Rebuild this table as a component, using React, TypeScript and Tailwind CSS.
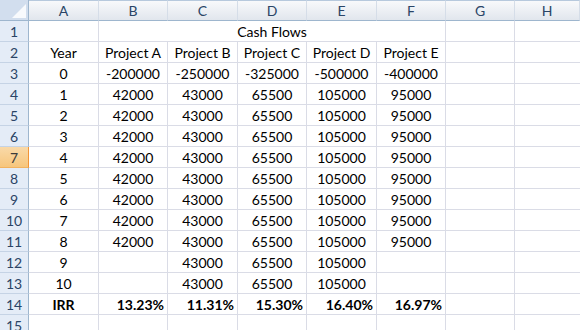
const cols = ['A', 'B', 'C', 'D', 'E', 'F', 'G', 'H'];

type Cell = { v: string; align?: 'c' | 'r'; bold?: boolean };

const body: Cell[][] = [
  [],
  [{ v: 'Year' }, { v: 'Project A' }, { v: 'Project B' }, { v: 'Project C' }, { v: 'Project D' }, { v: 'Project E' }],
  [{ v: '0' }, { v: '-200000' }, { v: '-250000' }, { v: '-325000' }, { v: '-500000' }, { v: '-400000' }],
  [{ v: '1' }, { v: '42000' }, { v: '43000' }, { v: '65500' }, { v: '105000' }, { v: '95000' }],
  [{ v: '2' }, { v: '42000' }, { v: '43000' }, { v: '65500' }, { v: '105000' }, { v: '95000' }],
  [{ v: '3' }, { v: '42000' }, { v: '43000' }, { v: '65500' }, { v: '105000' }, { v: '95000' }],
  [{ v: '4' }, { v: '42000' }, { v: '43000' }, { v: '65500' }, { v: '105000' }, { v: '95000' }],
  [{ v: '5' }, { v: '42000' }, { v: '43000' }, { v: '65500' }, { v: '105000' }, { v: '95000' }],
  [{ v: '6' }, { v: '42000' }, { v: '43000' }, { v: '65500' }, { v: '105000' }, { v: '95000' }],
  [{ v: '7' }, { v: '42000' }, { v: '43000' }, { v: '65500' }, { v: '105000' }, { v: '95000' }],
  [{ v: '8' }, { v: '42000' }, { v: '43000' }, { v: '65500' }, { v: '105000' }, { v: '95000' }],
  [{ v: '9' }, { v: '' }, { v: '43000' }, { v: '65500' }, { v: '105000' }, { v: '' }],
  [{ v: '10' }, { v: '' }, { v: '43000' }, { v: '65500' }, { v: '105000' }, { v: '' }],
  [
    { v: 'IRR', bold: true },
    { v: '13.23%', align: 'r', bold: true },
    { v: '11.31%', align: 'r', bold: true },
    { v: '15.30%', align: 'r', bold: true },
    { v: '16.40%', align: 'r', bold: true },
    { v: '16.97%', align: 'r', bold: true },
  ],
  [],
];

function RowHead({ n }: { n: number }) {
  const active = n === 7;
  return (
    <div
      className={
        active
          ? 'flex items-center justify-center border-r border-b border-r-[#f29436] border-b-[#f2b25f] bg-gradient-to-b from-[#f9d9a8] to-[#f7c67c] text-[#3b3b3b]'
          : 'flex items-center justify-center border-r border-b border-r-[#9eb6ce] border-b-[#c5d3e5] bg-[#e4ecf7] text-[#2a4466]'
      }
    >
      {n}
    </div>
  );
}

export default function App() {
  return (
    <div
      className="w-[580px] h-[330px] overflow-hidden bg-white text-[14px] text-black"
      style={{ fontFamily: 'Lato, "Open Sans", sans-serif' }}
    >
      <div className="grid grid-cols-[29px_70px_69px_70px_69px_70px_69px_69px_1fr] grid-rows-[21px] auto-rows-[21px]">
        {/* corner */}
        <div className="relative border-r border-b border-[#9eb6ce] bg-[#d2deee]">
          <svg className="absolute right-[2px] bottom-[2px]" width="14" height="14" viewBox="0 0 14 14">
            <polygon points="14,0 14,14 0,14" fill="#ffffff" opacity="0.85" />
          </svg>
        </div>
        {cols.map((c) => (
          <div
            key={c}
            className="flex items-center justify-center border-t border-t-[#b7c9dd] border-r border-r-[#d5dde8] border-b border-b-[#9eb6ce] bg-gradient-to-b from-[#f8f9fb] to-[#e1e6ed] text-[#2a4466]"
          >
            {c}
          </div>
        ))}

        {body.map((row, ri) => {
          const n = ri + 1;
          return [
            <RowHead key={`h${n}`} n={n} />,
            n === 1 ? (
              <>
                <div key="a1" className="border-r border-b border-[#dadce6]" />
                <div
                  key="m1"
                  className="col-span-5 flex items-center justify-center border-r border-b border-[#dadce6]"
                >
                  Cash Flows
                </div>
                <div key="g1" className="border-r border-b border-[#dadce6]" />
                <div key="hh1" className="border-b border-[#dadce6]" />
              </>
            ) : (
              cols.map((c, ci) => {
                const cell = row[ci];
                return (
                  <div
                    key={`${c}${n}`}
                    className={`flex items-center whitespace-nowrap border-b border-[#dadce6] ${
                      ci < 7 ? 'border-r' : ''
                    } ${cell?.align === 'r' ? 'justify-end pr-[3px]' : 'justify-center'} ${
                      cell?.bold ? 'font-bold' : ''
                    }`}
                  >
                    {cell?.v}
                  </div>
                );
              })
            ),
          ];
        })}
      </div>
    </div>
  );
}
